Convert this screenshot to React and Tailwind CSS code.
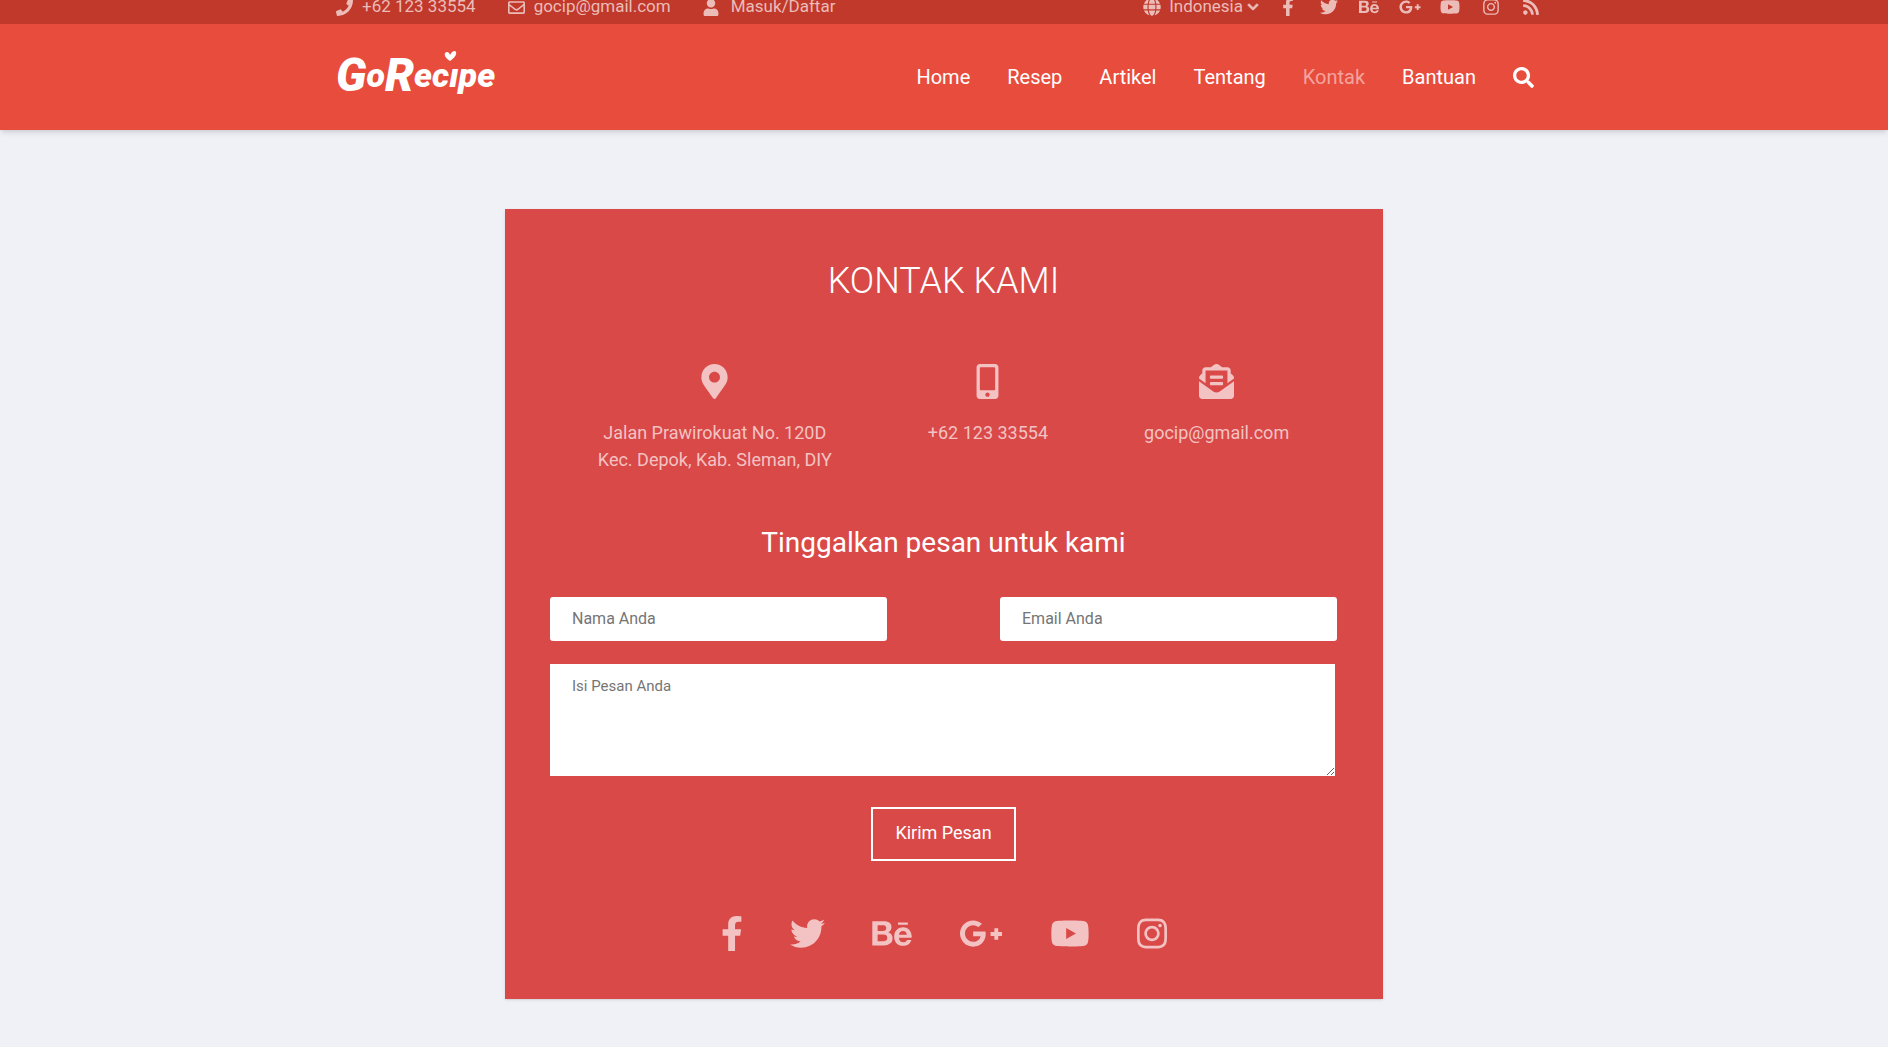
import React from "react";
import {
  FaPhone, FaRegEnvelope, FaUser, FaGlobe, FaChevronDown, FaFacebookF, FaTwitter,
  FaBehance, FaGooglePlusG, FaYoutube, FaInstagram, FaRss, FaSearch,
  FaMapMarkerAlt, FaMobileAlt, FaEnvelopeOpenText,
} from "react-icons/fa";

const socials = [
  { name: "Facebook", Icon: FaFacebookF, small: "w-3", large: "w-[22px]" },
  { name: "Twitter", Icon: FaTwitter, small: "w-[18px]", large: "w-[35px]" },
  { name: "Behance", Icon: FaBehance, small: "w-5", large: "w-10" },
  { name: "Google Plus", Icon: FaGooglePlusG, small: "w-[22px]", large: "w-11" },
  { name: "YouTube", Icon: FaYoutube, small: "w-5", large: "w-10" },
  { name: "Instagram", Icon: FaInstagram, small: "w-4", large: "w-[30px]" },
];

const feed = { name: "RSS", Icon: FaRss, small: "w-4" };

const nav = ["Home", "Resep", "Artikel", "Tentang", "Kontak", "Bantuan"];

function TopBar() {
  return (
    <div className="bg-[#c0392b] pb-2.5 text-[17px] text-[#ebbcb8]">
      <div className="mx-auto flex h-3.5 max-w-[1216px] items-center justify-between pr-[11px]">
        <div className="flex items-center gap-8">
          <a href="#telepon" className="flex items-center gap-[9px]">
            <FaPhone className="size-[17px]" />
            +62 123 33554
          </a>
          <a href="#email" className="flex items-center gap-[9px]">
            <FaRegEnvelope className="size-[17px]" />
            gocip@gmail.com
          </a>
          <a href="#masuk" className="flex items-center gap-3">
            <FaUser className="h-[17px] w-4" />
            Masuk/Daftar
          </a>
        </div>
        <div className="flex items-center gap-[19px]">
          <button type="button" className="flex items-center gap-2">
            <FaGlobe className="size-[18px]" />
            <span className="flex items-center gap-1">
              Indonesia
              <FaChevronDown className="size-3 stroke-current stroke-[40px]" />
            </span>
          </button>
          <div className="flex w-[263px] items-center justify-between">
            {[...socials, feed].map(({ name, Icon, small }) => (
              <a key={name} href={"#" + name} aria-label={name} className="flex w-5 justify-center">
                <Icon className={"h-[18px] max-w-none shrink-0 " + small} />
              </a>
            ))}
          </div>
        </div>
      </div>
    </div>
  );
}

function Logo() {
  return (
    <a href="#home" aria-label="GoRecipe">
      <svg width="160" height="56" viewBox="0 0 160 56" fill="#fff">
        <g fontFamily="Roboto, sans-serif" fontWeight="900" fontStyle="italic" fontSize="34">
          <text x="0" y="42">
            <tspan fontSize="46">G</tspan>
            <tspan dy="-4">o</tspan>
            <tspan fontSize="46" dy="4">R</tspan>
            <tspan dy="-4">ecıpe</tspan>
          </text>
        </g>
        <path d="M114 12 C110 9 108 7 109 4 C111 2 113 3 114 6 C116 2 119 1 120 3 C121 6 118 9 114 12 Z" />
      </svg>
    </a>
  );
}

function Header() {
  return (
    <header className="bg-[#e84c3d] shadow-md">
      <div className="mx-auto flex h-[106px] max-w-[1216px] items-center justify-between pr-[18px]">
        <Logo />
        <nav className="flex items-center gap-[37px] text-xl text-white">
          {nav.map((item) => (
            <a key={item} href={"#" + item} className={item === "Kontak" ? "text-[#f3a49c]" : ""}>
              {item}
            </a>
          ))}
          <button type="button" aria-label="Cari">
            <FaSearch className="size-[21px]" />
          </button>
        </nav>
      </div>
    </header>
  );
}

function ContactItem({ Icon, children }) {
  return (
    <div className="flex flex-col items-center gap-5 text-center text-lg leading-[27px]">
      <Icon className="size-[35px]" />
      <p>{children}</p>
    </div>
  );
}

function ContactCard() {
  return (
    <main className="mx-auto mt-[79px] mb-12 flex max-w-[878px] flex-col items-center bg-[#d94948] pt-[51px] pr-[46px] pb-12 pl-[45px] text-white shadow-sm">
      <h1 className="text-4xl leading-[42px] font-light">KONTAK KAMI</h1>
      <div className="mt-[62px] flex gap-24 text-[#f3c2c2]">
        <ContactItem Icon={FaMapMarkerAlt}>
          Jalan Prawirokuat No. 120D<br />Kec. Depok, Kab. Sleman, DIY
        </ContactItem>
        <ContactItem Icon={FaMobileAlt}>+62 123 33554</ContactItem>
        <ContactItem Icon={FaEnvelopeOpenText}>gocip@gmail.com</ContactItem>
      </div>
      <h2 className="mt-[52px] text-[28px] leading-9">Tinggalkan pesan untuk kami</h2>
      <form className="mt-9 flex w-full flex-col items-center" onSubmit={(e) => e.preventDefault()}>
        <div className="flex w-full gap-[113px]">
          <input type="text" aria-label="Nama Anda" placeholder="Nama Anda" className="h-11 min-w-0 flex-1 rounded-[3px] bg-white px-[22px] pb-0.5 text-base text-gray-800 placeholder:text-[#757575]" />
          <input type="email" aria-label="Email Anda" placeholder="Email Anda" className="h-11 min-w-0 flex-1 rounded-[3px] bg-white px-[22px] pb-0.5 text-base text-gray-800 placeholder:text-[#757575]" />
        </div>
        <textarea aria-label="Isi Pesan Anda" placeholder="Isi Pesan Anda" className="mt-[23px] mr-0.5 h-28 resize self-stretch bg-white px-[22px] py-3 text-[15px] leading-5 text-gray-800 placeholder:text-[#757575]" />
        <button type="submit" className="mt-[31px] border-2 border-white px-[22px] pt-[11px] pb-[13px] text-lg leading-[26px]">
          Kirim Pesan
        </button>
      </form>
      <div className="mt-[55px] flex items-center gap-[47px] text-[#f3c2c2]">
        {socials.map(({ name, Icon, large }) => (
          <a key={name} href={"#" + name} aria-label={name}>
            <Icon className={"h-[35px] " + large} />
          </a>
        ))}
      </div>
    </main>
  );
}

export default function App() {
  return (
    <div className="flow-root min-h-screen bg-[#f0f1f7] font-[Roboto,sans-serif]">
      <TopBar />
      <Header />
      <ContactCard />
    </div>
  );
}
